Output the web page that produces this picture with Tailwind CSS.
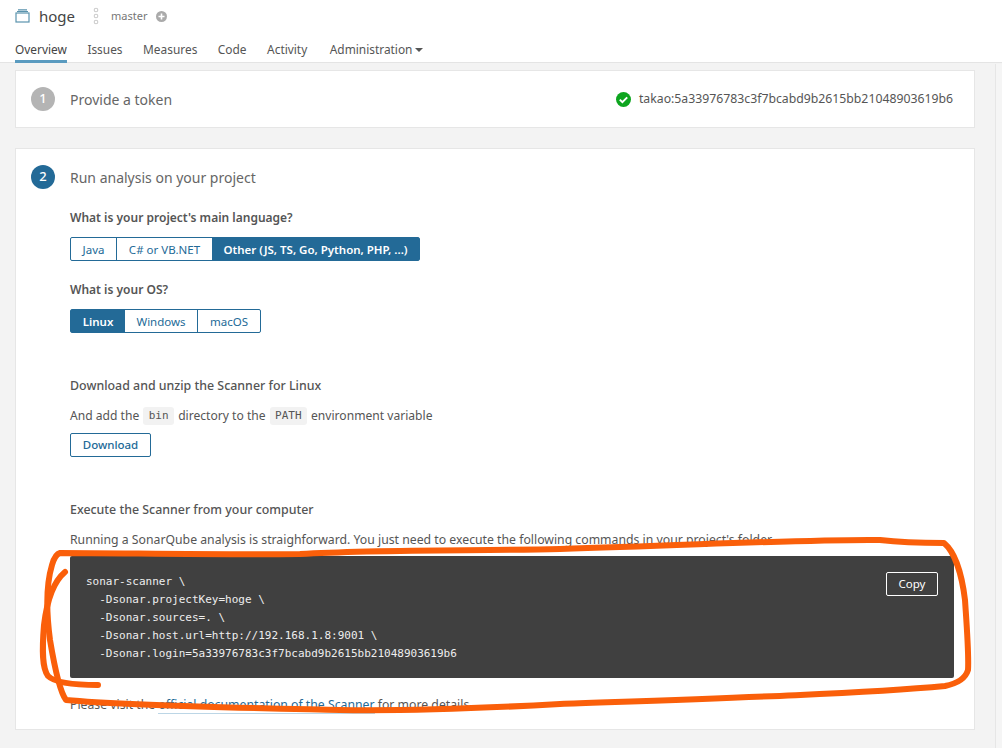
<!DOCTYPE html>
<html lang="en">
<head>
  <meta charset="UTF-8">
  <title>hoge - Overview</title>
  <script src="https://cdn.jsdelivr.net/npm/@tailwindcss/browser@4"></script>
</head>
<body class="relative h-[748px] w-[1002px] overflow-hidden bg-[#f3f3f3] font-['Noto_Sans',sans-serif] text-[12.1px] text-[#555]">

  <!-- header -->
  <header class="h-[63px] border-b border-[#e4e4e4] bg-white pl-[15px]">
    <div class="flex h-[39px] items-center pb-[7px]">
      <svg class="h-[14px] w-[16px]" viewBox="0 0 16 14" fill="none" stroke="#5a93ad" stroke-width="1.2">
        <rect x="1" y="4" width="13" height="9"/>
        <path d="M2 2.5h11M3 .8h9"/>
      </svg>
      <span class="ml-[8px] text-[15px] text-[#444]">hoge</span>
      <svg class="ml-[18px] h-[18px] w-[6px]" viewBox="0 0 6 18" fill="none" stroke="#ccc" stroke-width="1.1">
        <circle cx="3" cy="3" r="1.8"/><circle cx="3" cy="9" r="1.8"/><circle cx="3" cy="15" r="1.8"/>
      </svg>
      <span class="ml-[12px] text-[11px] text-[#777]">master</span>
      <svg class="ml-[9px] h-[11px] w-[11px]" viewBox="0 0 11 11">
        <circle cx="5.5" cy="5.5" r="5.5" fill="#aaa"/>
        <path d="M5.5 2.5v6M2.5 5.5h6" stroke="#fff" stroke-width="1.6"/>
      </svg>
    </div>
    <nav class="flex gap-[20.5px] pt-[2px] text-[11.9px] text-[#555]">
      <a class="h-[22px] border-b-[3px] border-[#5a9bc0] text-[#444]">Overview</a>
      <a>Issues</a>
      <a>Measures</a>
      <a>Code</a>
      <a>Activity</a>
      <a class="ml-[2px] flex items-start">Administration<span class="ml-[3px] mt-[7px] border-x-[4px] border-t-[4px] border-x-transparent border-t-[#555]"></span></a>
    </nav>
  </header>

  <main class="px-[15px] pt-[7px]">
    <!-- step 1 -->
    <section class="flex h-[58px] w-[960px] items-center justify-between border border-[#e6e6e6] bg-white pl-[15px] pr-[21px]">
      <div class="flex items-center">
        <span class="flex h-[24px] w-[24px] items-center justify-center rounded-full bg-[#b4b4b4] text-[13px] font-medium text-white">1</span>
        <span class="ml-[15px] text-[14px] text-[#666]">Provide a token</span>
      </div>
      <div class="flex items-center">
        <svg class="h-[15px] w-[15px]" viewBox="0 0 15 15">
          <circle cx="7.5" cy="7.5" r="7.5" fill="#0da51f"/>
          <path d="M3.8 7.6l2.6 2.6 4.8-4.8" fill="none" stroke="#fff" stroke-width="2"/>
        </svg>
        <span class="ml-[8px] text-[12.25px] text-[#555]">takao:5a33976783c3f7bcabd9b2615bb21048903619b6</span>
      </div>
    </section>

    <!-- step 2 -->
    <section class="mt-[20px] h-[582px] w-[960px] border border-[#e6e6e6] bg-white pl-[15px] pr-[20px] pt-[16px]">
      <div class="flex items-center">
        <span class="flex h-[24px] w-[24px] items-center justify-center rounded-full bg-[#236a97] text-[13px] font-medium text-white">2</span>
        <span class="ml-[15px] text-[14px] text-[#666]">Run analysis on your project</span>
      </div>

      <div class="ml-[39px]">
        <h3 class="mt-[20px] text-[12px] font-semibold leading-[18px] text-[#555]">What is your project's main language?</h3>
        <div class="mt-[10px] flex h-[24px] w-fit rounded-[2px] border border-[#236a97] text-[11.5px] text-[#236a97]">
          <span class="flex w-[46px] items-center justify-center border-r border-[#236a97] pt-[1px]">Java</span>
          <span class="flex w-[95px] items-center justify-center pt-[1px]">C# or VB.NET</span>
          <span class="flex w-[207px] items-center justify-center bg-[#236a97] pt-[1px] font-semibold text-white">Other (JS, TS, Go, Python, PHP, ...)</span>
        </div>

        <h3 class="mt-[20px] text-[12px] font-semibold leading-[18px] text-[#555]">What is your OS?</h3>
        <div class="mt-[10px] flex h-[24px] w-fit rounded-[2px] border border-[#236a97] text-[11.5px] text-[#236a97]">
          <span class="flex w-[54px] items-center justify-center bg-[#236a97] pt-[1px] font-semibold text-white">Linux</span>
          <span class="flex w-[73px] items-center justify-center border-r border-[#236a97] pt-[1px]">Windows</span>
          <span class="flex w-[62px] items-center justify-center pt-[1px]">macOS</span>
        </div>

        <h3 class="mt-[44px] text-[12.4px] font-medium leading-[18px] text-[#555]">Download and unzip the Scanner for Linux</h3>
        <p class="mt-[12px] flex h-[18px] items-center">
          And add the
          <code class="mx-[4px] rounded-[3px] bg-[#f2f2f2] px-[5.5px] font-['DejaVu_Sans_Mono',monospace] text-[11px] leading-[18px]">bin</code>
          directory to the
          <code class="mx-[4px] rounded-[3px] bg-[#f2f2f2] px-[5.5px] font-['DejaVu_Sans_Mono',monospace] text-[11px] leading-[18px]">PATH</code>
          environment variable
        </p>
        <button class="mt-[8px] flex h-[24px] w-[81px] items-center justify-center rounded-[2px] border border-[#236a97] text-[11.5px] font-medium text-[#236a97]">Download</button>

        <h3 class="mt-[44px] text-[12.4px] font-medium leading-[18px] text-[#555]">Execute the Scanner from your computer</h3>
        <p class="mt-[12px] text-[12.25px] leading-[18px]">Running a SonarQube analysis is straighforward. You just need to execute the following commands in your project's folder.</p>

        <div class="relative mt-[7px] h-[122px] w-[884px] rounded-[2px] bg-[#404040] pl-[16px] pt-[17px]">
          <pre class="font-['DejaVu_Sans_Mono',monospace] text-[11px] font-medium leading-[18px] text-[#eee]">sonar-scanner \
  -Dsonar.projectKey=hoge \
  -Dsonar.sources=. \
  -Dsonar.host.url=http://192.168.1.8:9001 \
  -Dsonar.login=5a33976783c3f7bcabd9b2615bb21048903619b6</pre>
          <button class="absolute right-[16px] top-[16px] flex h-[24px] w-[52px] items-center justify-center rounded-[2px] border border-white text-[11.5px] text-white">Copy</button>
        </div>

        <p class="mt-[18px] text-[12.25px] leading-[18px]">Please visit the <a class="border-b border-[#bcd6e6] text-[#236a97]">official documentation of the Scanner</a> for more details.</p>
      </div>
    </section>
  </main>

  <!-- scrollbar gutter -->
  <div class="absolute right-0 top-[64px] h-[684px] w-[7px] border-l border-[#e6e6e6] bg-[#f5f5f5]"></div>

  <!-- orange marker annotation drawn over the screenshot -->
  <svg class="absolute left-0 top-0" width="1002" height="748" viewBox="0 0 1002 748" fill="none" stroke="#fa5f0a" stroke-width="6" stroke-linecap="round" stroke-linejoin="round">
    <path d="M65 572C53 582 47 600 44 625C42 650 42 668 48 676C56 684 80 685 98 685"/>
    <path d="M60 553C120 553 220 555 300 554C380 549 480 551 560 549C700 545 810 539 880 540C905 543 925 543 944 543C955 552 962 575 965 600C967 630 969 655 968 670C965 680 955 684 945 686C860 694 700 699 560 704C470 709 410 711 340 710C250 708 130 706 66 700C60 692 55 670 50 640C46 610 46 585 52 565C54 558 56 554 60 553Z"/>
  </svg>
</body>
</html>
